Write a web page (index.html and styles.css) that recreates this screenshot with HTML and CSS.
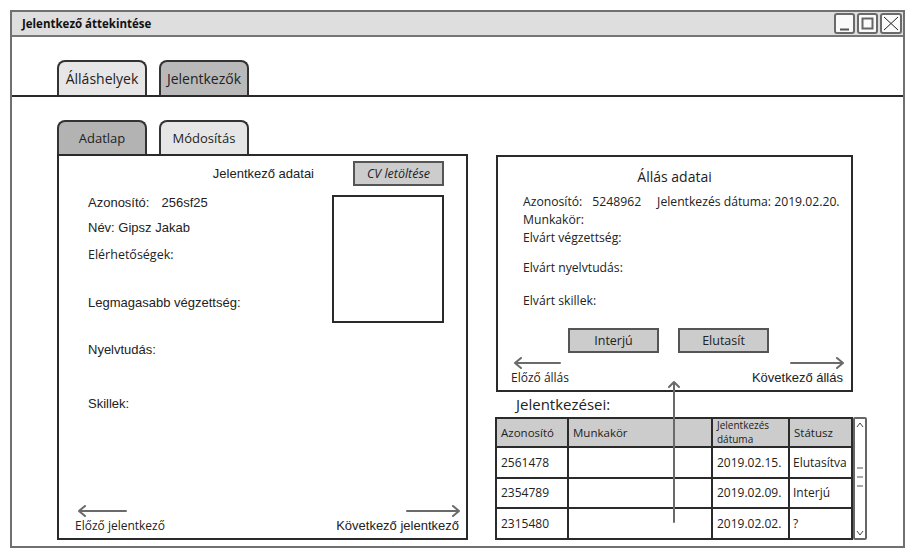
FILE: index.html
```html
<!DOCTYPE html>
<html lang="hu">
<head>
<meta charset="utf-8">
<title>Jelentkező áttekintése</title>
<link rel="stylesheet" href="styles.css">
</head>
<body>
<div class="window">
  <div class="titlebar">
    <span class="title">Jelentkező áttekintése</span>
    <div class="controls">
      <svg class="ctl" width="21" height="21" viewBox="0 0 21 21"><rect x="1" y="1" width="19" height="19" rx="2" fill="#fafafa" stroke="#6a6a6a" stroke-width="2"/><path d="M6 16.5 H15" stroke="#555" stroke-width="2"/></svg>
      <svg class="ctl" width="21" height="21" viewBox="0 0 21 21"><rect x="1" y="1" width="19" height="19" rx="2" fill="#fafafa" stroke="#6a6a6a" stroke-width="2"/><rect x="5.5" y="5.5" width="10" height="10" fill="none" stroke="#666" stroke-width="2"/></svg>
      <svg class="ctl" width="22" height="21" viewBox="0 0 22 21"><rect x="1" y="1" width="20" height="19" rx="2" fill="#fafafa" stroke="#6a6a6a" stroke-width="2"/><path d="M4 4 L18 17 M18 4 L4 17" stroke="#222" stroke-width="1"/></svg>
    </div>
  </div>

  <div class="top-tabs">
    <div class="tab tab-light">Álláshelyek</div>
    <div class="tab tab-dark">Jelentkezők</div>
  </div>

  <div class="content">
    <div class="left-col">
      <div class="sub-tabs">
        <div class="tab sub tab-darker">Adatlap</div>
        <div class="tab sub tab-light">Módosítás</div>
      </div>
      <div class="panel">
        <div class="panel-head">
          <span class="head-title">Jelentkező adatai</span>
          <div class="btn cv">CV letöltése</div>
        </div>
        <div class="panel-body">
          <div class="fields">
            <div class="field"><span>Azonosító:</span><span class="val">256sf25</span></div>
            <div class="field gap-a">Név: Gipsz Jakab</div>
            <div class="field comic small gap-b">Elérhetőségek:</div>
            <div class="field gap-c">Legmagasabb végzettség:</div>
            <div class="field gap-d">Nyelvtudás:</div>
            <div class="field gap-e">Skillek:</div>
          </div>
          <div class="photo"></div>
        </div>
        <div class="nav nav-left-panel">
          <div class="nav-item">
            <svg width="50" height="12" viewBox="0 0 50 12"><path d="M49 6 H2 M8 1 L2 6 L8 11" fill="none" stroke="#6a6a6a" stroke-width="2" stroke-linecap="round" stroke-linejoin="round"/></svg>
            <span class="comic nav-text">Előző jelentkező</span>
          </div>
          <div class="nav-item end">
            <svg width="55" height="12" viewBox="0 0 55 12"><path d="M1 6 H53 M47 1 L53 6 L47 11" fill="none" stroke="#6a6a6a" stroke-width="2" stroke-linecap="round" stroke-linejoin="round"/></svg>
            <span class="nav-text arial-nav">Következő jelentkező</span>
          </div>
        </div>
      </div>
    </div>

    <div class="right-col">
      <div class="job-box comic">
        <div class="job-title">Állás adatai</div>
        <div class="job-fields">
          <div class="jf first"><span>Azonosító:</span><span class="jid">5248962</span><span class="jdate">Jelentkezés dátuma: 2019.02.20.</span></div>
          <div class="jf">Munkakör:</div>
          <div class="jf">Elvárt végzettség:</div>
          <div class="jf gap-j">Elvárt nyelvtudás:</div>
          <div class="jf gap-k">Elvárt skillek:</div>
        </div>
        <div class="job-buttons">
          <div class="btn act">Interjú</div>
          <div class="btn act">Elutasít</div>
        </div>
        <div class="nav nav-job">
          <div class="nav-item">
            <svg width="48" height="12" viewBox="0 0 48 12"><path d="M47 6 H2 M8 1 L2 6 L8 11" fill="none" stroke="#6a6a6a" stroke-width="2" stroke-linecap="round" stroke-linejoin="round"/></svg>
            <span class="nav-text job-prev">Előző állás</span>
          </div>
          <div class="nav-item end">
            <svg width="55" height="12" viewBox="0 0 55 12"><path d="M1 6 H53 M47 1 L53 6 L47 11" fill="none" stroke="#6a6a6a" stroke-width="2" stroke-linecap="round" stroke-linejoin="round"/></svg>
            <span class="nav-text arial-nav">Következő állás</span>
          </div>
        </div>
      </div>

      <div class="apps-label comic">Jelentkezései:</div>
      <div class="table-wrap">
        <table class="apps comic">
          <colgroup><col class="c1"><col class="c2"><col class="c3"><col class="c4"></colgroup>
          <thead>
            <tr><th>Azonosító</th><th>Munkakör</th><th class="two"><span class="hl">Jelentkezés</span><span class="hl">dátuma</span></th><th>Státusz</th></tr>
          </thead>
          <tbody>
            <tr><td>2561478</td><td></td><td>2019.02.15.</td><td class="st">Elutasítva</td></tr>
            <tr><td>2354789</td><td></td><td>2019.02.09.</td><td class="st">Interjú</td></tr>
            <tr><td>2315480</td><td></td><td>2019.02.02.</td><td class="st">?</td></tr>
          </tbody>
        </table>
        <div class="scrollbar">
          <svg width="12" height="121" viewBox="0 0 12 121"><path d="M3 8 L6 4 L9 8" fill="none" stroke="#444" stroke-width="1"/><path d="M3 49 H9 M3 58 H9 M3 67 H9" stroke="#555" stroke-width="1"/><path d="M3 112 L6 116 L9 112" fill="none" stroke="#444" stroke-width="1"/></svg>
        </div>
      </div>

      <svg class="link-arrow" width="12" height="143" viewBox="0 0 12 143"><path d="M6 142 V2 M1 7 L6 2 L11 7" fill="none" stroke="#6a6a6a" stroke-width="2" stroke-linecap="round" stroke-linejoin="round"/></svg>
    </div>
  </div>
</div>
</body>
</html>
```

FILE: styles.css
```css
body {
  margin: 0;
  background: #ffffff;
  font-family: "Liberation Sans", Arial, sans-serif;
  color: #222;
}

.comic {
  font-family: "Open Sans", "Liberation Sans", sans-serif;
}

.window {
  margin: 10px 0 0 10px;
  width: 895px;
  height: 538px;
  box-sizing: border-box;
  border: 2px solid #707070;
  display: flex;
  flex-direction: column;
}

.titlebar {
  height: 23px;
  background: #dedede;
  border-bottom: 2px solid #767676;
  display: flex;
  justify-content: space-between;
  align-items: center;
  padding-left: 10px;
}

.title {
  font-family: "Open Sans", sans-serif;
  font-weight: 700;
  font-size: 11.5px;
  color: #111;
}

.controls {
  display: flex;
  gap: 2px;
  align-self: flex-start;
  margin-top: 1px;
  padding-right: 1px;
}

.ctl { display: block; }

.top-tabs {
  height: 58px;
  border-bottom: 2px solid #2a2a2a;
  display: flex;
  align-items: flex-end;
  gap: 12px;
  padding-left: 45px;
}

.tab {
  width: 90px;
  height: 35px;
  box-sizing: border-box;
  border: 2px solid #333;
  border-bottom: none;
  border-radius: 8px 8px 0 0;
  display: flex;
  align-items: center;
  justify-content: center;
  font-family: "Open Sans", sans-serif;
  font-size: 14px;
  color: #222;
}

.tab-light { background: #e6e6e6; }
.tab-dark { background: #b9b9b9; }
.tab-darker { background: #b3b3b3; }

.content {
  flex: 1;
  display: flex;
  gap: 27px;
  padding: 23px 0 0 45px;
}

.left-col {
  width: 411px;
  display: flex;
  flex-direction: column;
}

.sub-tabs {
  display: flex;
  gap: 12px;
  height: 34px;
  align-items: flex-end;
}

.tab.sub {
  height: 34px;
  font-size: 13px;
}

.panel {
  height: 386px;
  box-sizing: border-box;
  border: 2px solid #2a2a2a;
  padding: 5px 22px 4px 29px;
  display: flex;
  flex-direction: column;
  font-size: 13px;
}

.panel-head {
  display: flex;
  justify-content: flex-end;
  align-items: center;
  gap: 39px;
}

.head-title { font-size: 13px; }

.btn {
  box-sizing: border-box;
  background: #cccccc;
  border: 2px solid #555;
  display: flex;
  align-items: center;
  justify-content: center;
  font-family: "Open Sans", sans-serif;
  color: #222;
}

.btn.cv {
  width: 91px;
  height: 25px;
  font-size: 12.5px;
  font-style: italic;
}

.panel-body {
  display: flex;
  justify-content: space-between;
  align-items: flex-start;
  margin-top: 9px;
}

.fields {
  display: flex;
  flex-direction: column;
}

.field {
  line-height: 16px;
  height: 16px;
  font-size: 13px;
  color: #222;
}

.field .val { margin-left: 12px; }

.field.small { font-size: 12.5px; }

.gap-a { margin-top: 9px; }
.gap-b { margin-top: 11px; }
.gap-c { margin-top: 32px; }
.gap-d { margin-top: 31px; }
.gap-e { margin-top: 38px; }

.photo {
  width: 112px;
  height: 128px;
  box-sizing: border-box;
  border: 2px solid #2a2a2a;
  background: #fff;
}

.nav {
  display: flex;
  justify-content: space-between;
  align-items: flex-end;
}

.nav-left-panel {
  margin: auto -15px 0 -13px;
}

.nav-item {
  display: flex;
  flex-direction: column;
  align-items: flex-start;
}

.nav-item.end { align-items: flex-end; }

.nav-item svg { display: block; margin-left: 2px; }
.nav-item.end svg { margin-left: 0; margin-right: -2px; }

.nav-text {
  line-height: 16px;
  font-size: 12px;
  color: #222;
  margin-top: 1px;
}

.nav-text.arial-nav {
  font-family: "Liberation Sans", Arial, sans-serif;
  font-size: 13px;
}

.right-col {
  position: relative;
  width: 370px;
  display: flex;
  flex-direction: column;
}

.job-box {
  margin-top: 35px;
  margin-left: 1px;
  width: 357px;
  height: 237px;
  box-sizing: border-box;
  border: 2px solid #2a2a2a;
  padding: 11px 8px 3px 0;
  display: flex;
  flex-direction: column;
}

.job-title {
  text-align: center;
  font-size: 14px;
  line-height: 18px;
  padding-left: 8px;
}

.job-fields {
  padding-left: 25px;
  margin-top: 8px;
  font-size: 12.2px;
}

.jf {
  line-height: 16px;
  height: 16px;
  margin-top: 2px;
}

.jf.first { margin-top: 0; }
.jid { margin-left: 10px; }
.jdate { margin-left: 16px; }
.gap-j { margin-top: 14px; }
.gap-k { margin-top: 17px; }

.job-buttons {
  display: flex;
  gap: 19px;
  margin: 19px 0 0 70px;
}

.btn.act {
  width: 91px;
  height: 25px;
  font-size: 12.5px;
  border-color: #555;
}

.nav-job {
  margin: 4px 0 0 13px;
}

.nav-text.job-prev { font-size: 12px; }

.apps-label {
  margin: 3px 0 0 21px;
  font-size: 15px;
  line-height: 18px;
}

.table-wrap {
  display: flex;
  margin-top: 4px;
}

.apps {
  border-collapse: collapse;
  table-layout: fixed;
  width: 356px;
  font-size: 11.5px;
  color: #222;
}

.c1 { width: 72px; }
.c2 { width: 144px; }
.c3 { width: 77px; }
.c4 { width: 63px; }

.apps th,
.apps td {
  border: 2px solid #2a2a2a;
  height: 27px;
  padding: 0 0 0 4px;
  text-align: left;
  font-weight: normal;
  white-space: nowrap;
  overflow: hidden;
}

.apps th {
  background: #cccccc;
  font-size: 11.5px;
}

.apps th.two {
  font-size: 10px;
  padding-top: 0;
}

.hl {
  display: block;
  line-height: 13.5px;
  height: 13.5px;
}

.apps td { font-size: 12px; }
.apps td.st { padding-left: 3px; }

.scrollbar {
  width: 14px;
  height: 123px;
  box-sizing: border-box;
  border: 2px solid #666;
  border-radius: 2px;
  background: #fff;
}

.scrollbar svg { display: block; margin-left: -1px; }

.link-arrow {
  position: absolute;
  left: 173px;
  top: 260px;
}
```
